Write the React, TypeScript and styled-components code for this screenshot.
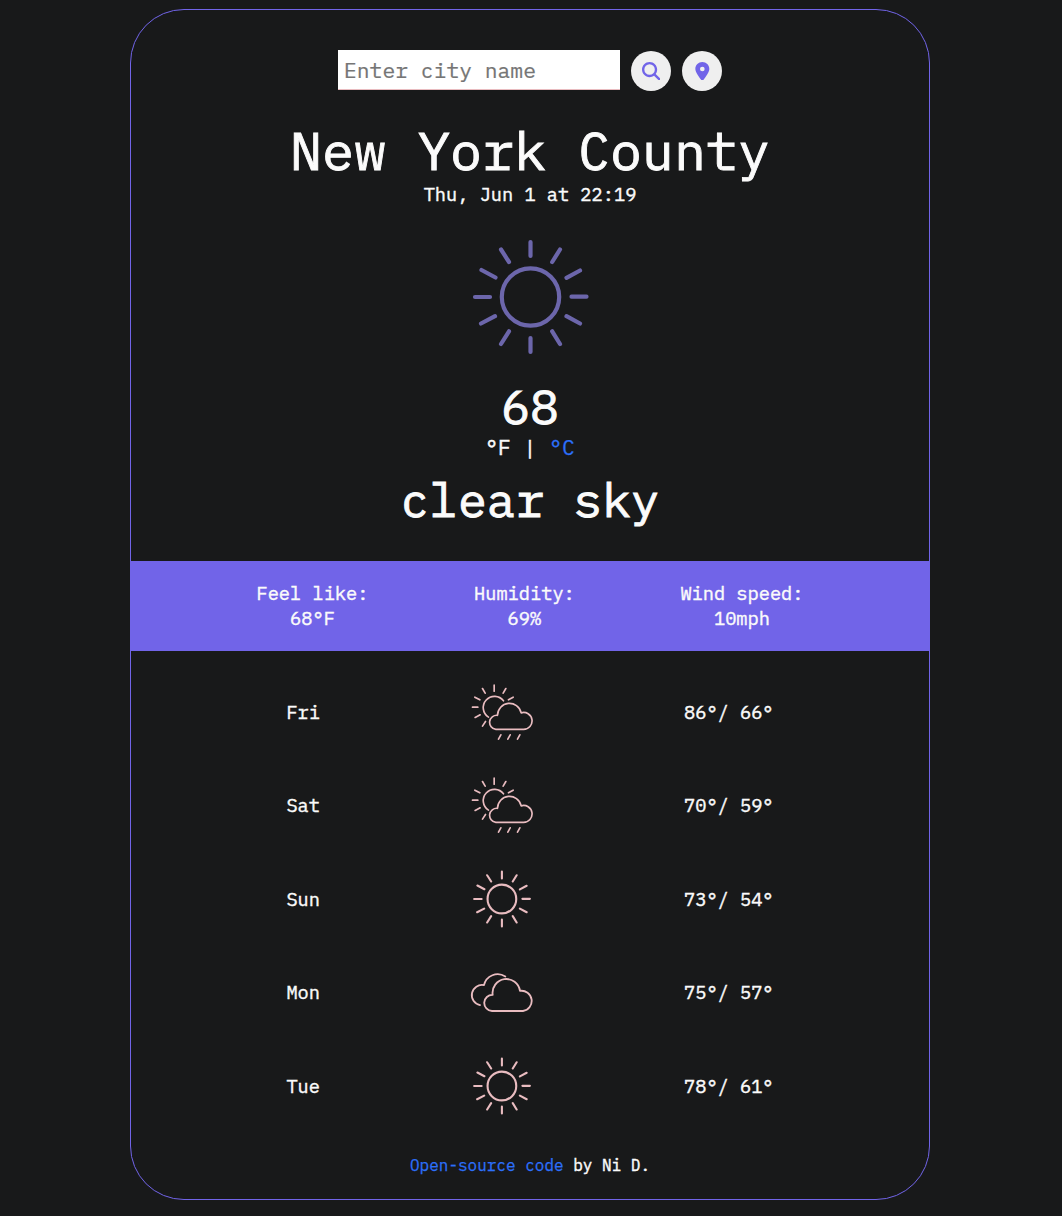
import React from 'react';
import styled, { createGlobalStyle } from 'styled-components';
import { FaMagnifyingGlass, FaLocationDot } from 'react-icons/fa6';

const PURPLE = '#7164e8';
const PINK = '#e9bcc0';
const LINK = '#2c70fb';
const DARK = '#18191a';

const GlobalStyle = createGlobalStyle`
  *, *::before, *::after { box-sizing: border-box; }
  body {
    margin: 0;
    background: ${DARK};
    color: #fbfbfb;
    font-family: 'IBM Plex Mono', 'Liberation Mono', monospace;
    font-size: 16px;
    -webkit-text-stroke: 0.4px;
  }
`;

const Page = styled.main`
  min-height: 1216px;
  padding: 9px 132px 0 130px;
`;

const Card = styled.section`
  height: 1191px;
  border: 1px solid ${PURPLE};
  border-radius: 54px;
  display: flex;
  flex-direction: column;
`;

const SearchForm = styled.form`
  display: flex;
  justify-content: center;
  align-items: center;
  gap: 11px;
  margin-top: 40px;
  height: 41px;
`;

const CityInput = styled.input`
  width: 282px;
  height: 40px;
  align-self: flex-start;
  border: 0;
  border-bottom: 1px solid ${PINK};
  border-radius: 0;
  padding: 0 6px;
  background: #fff;
  color: #222;
  font: 21.33px 'IBM Plex Mono', 'Liberation Mono', monospace;
  outline: none;
  -webkit-text-stroke: 0.2px;
  &::placeholder { color: #757575; opacity: 1; }
`;

const RoundButton = styled.button`
  width: 40px;
  height: 40px;
  align-self: flex-end;
  padding: 0;
  border: 0;
  border-radius: 50%;
  background: #efefef;
  color: ${PURPLE};
  display: flex;
  align-items: center;
  justify-content: center;
`;

const Current = styled.div`
  display: flex;
  flex-direction: column;
  align-items: center;
  height: 470px;
  padding-top: 25px;
`;

const Line = styled.div<{ $size: number; $height: number }>`
  font-size: ${p => p.$size}px;
  height: ${p => p.$height}px;
  line-height: ${p => p.$height}px;
  white-space: pre;
  -webkit-text-stroke: ${p => (p.$size > 40 ? 0.9 : 0.4)}px;
`;

const HeroIcon = styled.div`
  height: 128px;
  margin: 28px 0 12px;
  svg { display: block; }
`;

const Link = styled.a`
  color: ${LINK};
  -webkit-text-stroke: 0.25px;
  text-decoration: none;
`;

const Stats = styled.div`
  height: 90px;
  background: ${PURPLE};
  display: flex;
  justify-content: center;
  align-items: center;
  gap: 105.6px;
`;

const Stat = styled.div`
  font-size: 18.67px;
  line-height: 25px;
  text-align: center;
`;

const Forecast = styled.div`
  height: 467px;
  margin-top: 15px;
  display: grid;
  grid-template-rows: repeat(5, 1fr);
`;

const Day = styled.div`
  display: flex;
  justify-content: center;
  align-items: center;
  gap: 150px;
  font-size: 18.67px;
  svg { display: block; }
  span { padding-bottom: 1.6px; }
`;

const Footer = styled.footer`
  margin-top: 21px;
  text-align: center;
  line-height: 22px;
`;

function Sun({ size, color, left = 0 }: { size: number; color: string; left?: number }) {
  return (
    <svg width={size} height={size} viewBox={`${left} 0 128 128`} fill="none" stroke={color} strokeWidth="4.2" strokeLinecap="round">
      <circle cx="64.5" cy="64" r="28.700" />
      <path d="M64.5 9v14M64.5 105v14M9 64h15M105.500 63.700h15M94 16.500l-7.800 12.500M35 16.500L43 29M114 37.500l-13.500 7.300M15.500 37l14 7.500M15 90.500l14-7.300M114 90.500l-13.500-7.300M35 111l8-12.700M94 111l-7.800-12.700" />
    </svg>
  );
}

function Rain() {
  return (
    <svg width="64" height="64" viewBox="30.500 32.500 192 192" fill="none" stroke={PINK} strokeWidth="5" strokeLinecap="round" strokeLinejoin="round">
      <path d="M131 92A33.800 33.800 0 1 0 86 141" />
      <path d="M103 45v18M138 55l-8 14M160 81l-14 8M68 55l8 14M45 81l15 8M38 111h16M46 142l15-8M68 168l9-14" />
      <path d="M108 177.500H191A25.300 25.300 0 1 0 184 128A36 37 0 0 0 113 135.500A21 21 0 0 0 108 177.500Z" />
      <path d="M123 194l-7 13M151 194l-7 13M180 194l-7 13" />
    </svg>
  );
}

function Clouds() {
  return (
    <svg width="64" height="64" viewBox="30 18.500 192 192" fill="none" stroke={PINK} strokeWidth="5.500" strokeLinecap="round" strokeLinejoin="round">
      <path d="M60 151A30.500 30.500 0 0 1 72 91A42 42 0 0 1 136 65" />
      <path d="M96 168.500H189A30.500 30.500 0 0 0 180 108A41.300 41.300 0 0 0 98 120A24 24 0 0 0 96 168.500Z" />
    </svg>
  );
}

const stats = [
  ['Feel like:', '68°F'],
  ['Humidity:', '69%'],
  ['Wind speed:', '10mph'],
];

const days = [
  { name: 'Fri', icon: <Rain />, temps: '86°/ 66°' },
  { name: 'Sat', icon: <Rain />, temps: '70°/ 59°' },
  { name: 'Sun', icon: <Sun size={64} color={PINK} left={0.7} />, temps: '73°/ 54°' },
  { name: 'Mon', icon: <Clouds />, temps: '75°/ 57°' },
  { name: 'Tue', icon: <Sun size={64} color={PINK} left={0.7} />, temps: '78°/ 61°' },
];

export default function App() {
  return (
    <Page>
      <GlobalStyle />
      <Card>
        <SearchForm onSubmit={e => e.preventDefault()}>
          <CityInput placeholder="Enter city name" />
          <RoundButton aria-label="Search"><FaMagnifyingGlass size={18.67} /></RoundButton>
          <RoundButton type="button" aria-label="Current location"><FaLocationDot size={18.67} /></RoundButton>
        </SearchForm>
        <Current>
          <Line $size={53.33} $height={68}>New York County</Line>
          <Line $size={18.67} $height={21}>Thu, Jun 1 at 22:19</Line>
          <HeroIcon><Sun size={128} color="#6c66ab" /></HeroIcon>
          <Line $size={48} $height={66}>68</Line>
          <Line $size={21.33} $height={17}>°F | <Link>°C</Link></Line>
          <Line $size={48} $height={86}>clear sky</Line>
        </Current>
        <Stats>
          {stats.map(([label, value]) => (
            <Stat key={label}>{label}<br />{value}</Stat>
          ))}
        </Stats>
        <Forecast>
          {days.map(d => (
            <Day key={d.name}><span>{d.name}</span>{d.icon}<span>{d.temps}</span></Day>
          ))}
        </Forecast>
        <Footer><Link>Open-source code</Link> by Ni D.</Footer>
      </Card>
    </Page>
  );
}
